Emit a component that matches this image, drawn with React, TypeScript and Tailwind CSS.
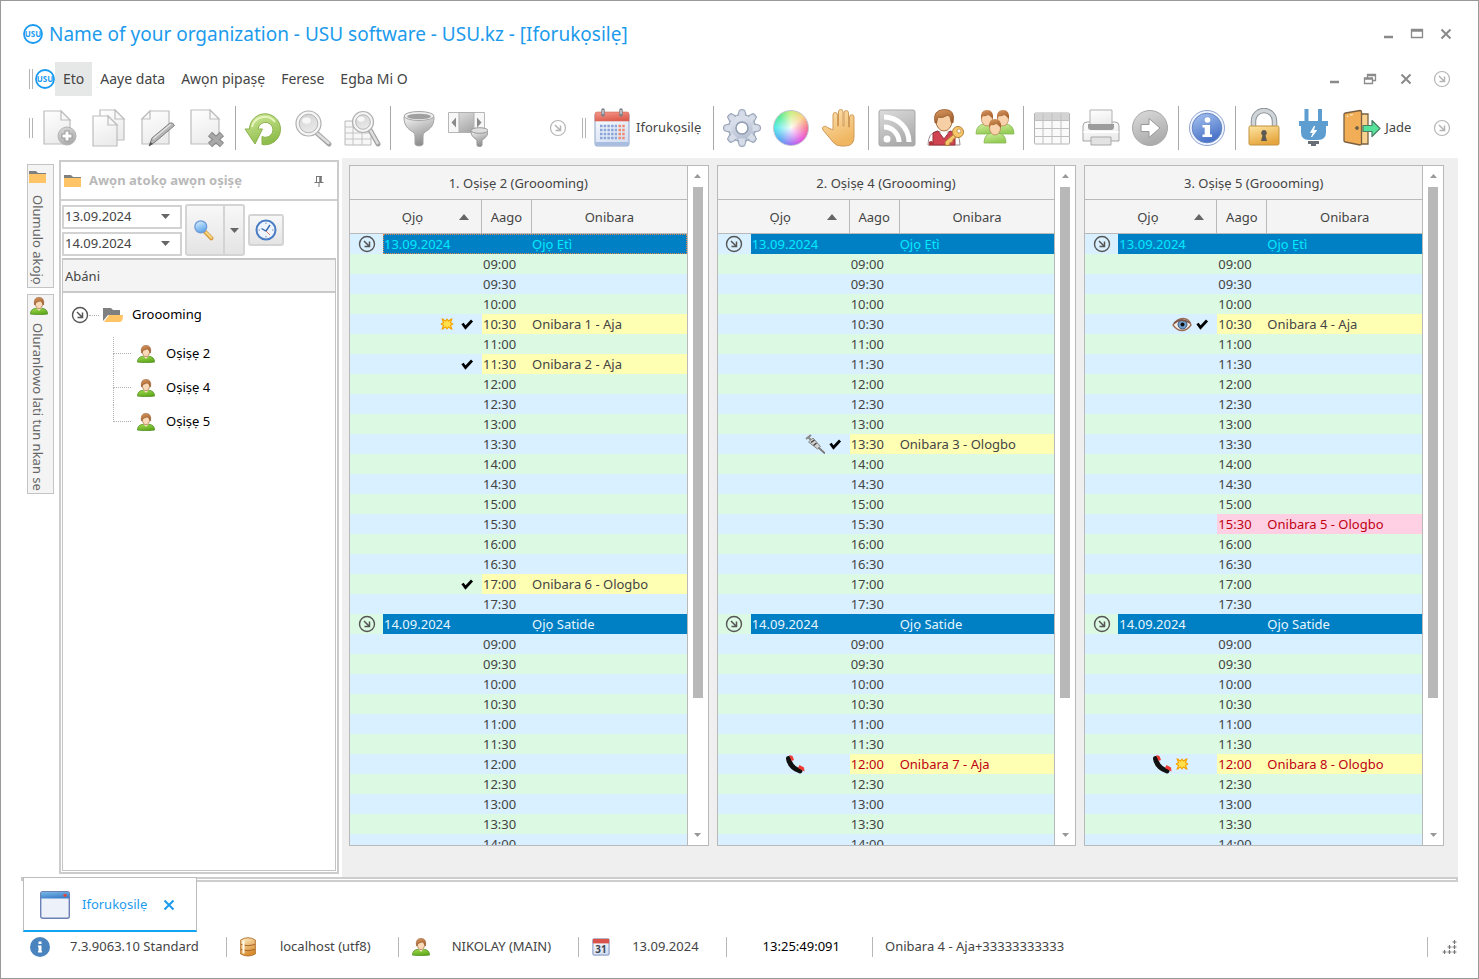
import type { ReactNode } from "react";

/* ================================================================
   USU booking window: menu, toolbar, specialist tree, schedules
   ================================================================ */

type Mark = "check" | "sun" | "eye" | "syringe" | "phone";

interface Booking {
  day: number;
  time: string;
  client: string;
  tone: "normal" | "unpaid" | "missed";
  marks: (Mark | null)[];
}

interface Schedule {
  title: string;
  focused?: boolean;
  bookings: Booking[];
}

/* slots: half-hour rows loaded for the day */
const DAYS = [
  { date: "13.09.2024", name: "Ọjọ Ẹtì", slots: 18, text: "text-[#00eaff]" },
  { date: "14.09.2024", name: "Ọjọ Satide", slots: 11, text: "text-[#e8f6ff]" },
];

const TIMES = Array.from({ length: 18 }, (_, i) => {
  const hour = String(9 + Math.floor(i / 2)).padStart(2, "0");
  return `${hour}:${i % 2 ? "30" : "00"}`;
});

/* marks are three slots, read left to right */
const SCHEDULES: Schedule[] = [
  {
    title: "1. Oṣiṣẹ 2 (Groooming)",
    focused: true,
    bookings: [
      { day: 0, time: "10:30", client: "Onibara 1 - Aja", tone: "normal", marks: [null, "sun", "check"] },
      { day: 0, time: "11:30", client: "Onibara 2 - Aja", tone: "normal", marks: [null, null, "check"] },
      { day: 0, time: "17:00", client: "Onibara 6 - Ologbo", tone: "normal", marks: [null, null, "check"] },
    ],
  },
  {
    title: "2. Oṣiṣẹ 4 (Groooming)",
    bookings: [
      { day: 0, time: "13:30", client: "Onibara 3 - Ologbo", tone: "normal", marks: [null, "syringe", "check"] },
      { day: 1, time: "12:00", client: "Onibara 7 - Aja", tone: "unpaid", marks: ["phone", null, null] },
    ],
  },
  {
    title: "3. Oṣiṣẹ 5 (Groooming)",
    bookings: [
      { day: 0, time: "10:30", client: "Onibara 4 - Aja", tone: "normal", marks: [null, "eye", "check"] },
      { day: 0, time: "15:30", client: "Onibara 5 - Ologbo", tone: "missed", marks: [null, null, null] },
      { day: 1, time: "12:00", client: "Onibara 8 - Ologbo", tone: "unpaid", marks: ["phone", "sun", null] },
    ],
  },
];

const TONES = {
  normal: "bg-[#ffffb4] text-[#444]",
  unpaid: "bg-[#ffffb4] text-[#c00010]",
  missed: "bg-[#ffd0e4] text-[#c00010]",
};

/* ── Icons ── */

function Gradients() {
  const stops: [string, string, string][] = [
    ["gPaper", "#ffffff", "#ececec"],
    ["gSteel", "#f4f4f4", "#8e8e8e"],
    ["gGreen", "#d3eb9c", "#8fbd4c"],
    ["gGear", "#e9edf5", "#b4bed0"],
    ["gHand", "#fde3b2", "#efb560"],
    ["gGold", "#fde6a3", "#e6a63e"],
    ["gGrey", "#dcdcdc", "#acacac"],
    ["gGlass", "#d2d2d2", "#e8e8e8"],
    ["gInfo", "#a9c4f0", "#4a74c8"],
    ["gShirt", "#a4dc4c", "#5fa81e"],
    ["gHair", "#d99a62", "#a5602c"],
    ["gLight", "#d3ef9f", "#94cc55"],
    ["gCal", "#ffffff", "#d5e0f3"],
    ["gRed", "#f59a8c", "#dd5d4e"],
    ["gWin", "#79b9e8", "#3f7fc8"],
    ["gDb", "#fff3cf", "#d98c2c"],
    ["gLens", "#e4f4ff", "#5fa8ec"],
  ];
  return (
    <svg width="0" height="0" className="absolute" aria-hidden="true">
      <defs>
        {stops.map(([id, from, to]) => (
          <linearGradient key={id} id={id} x1="0" y1="0" x2="0.4" y2="1">
            <stop offset="0" stopColor={from} />
            <stop offset="1" stopColor={to} />
          </linearGradient>
        ))}
      </defs>
    </svg>
  );
}

function Big({ children }: { children: ReactNode }) {
  return (
    <svg className="h-10 w-10 shrink-0" viewBox="0 0 40 40" fill="none" aria-hidden="true">
      {children}
    </svg>
  );
}

const sheet = (x: number, y: number, w: number, h: number) => (
  <>
    <path
      d={`M${x} ${y}h${w - 9}l9 9v${h - 9}h${-w}z`}
      fill="url(#gPaper)"
      stroke="#bdbdbd"
      strokeWidth="1.2"
    />
    <path d={`M${x + w - 9} ${y}v9h9z`} fill="#f8f8f8" stroke="#bdbdbd" strokeWidth="1.2" />
  </>
);

const DocAdd = () => (
  <Big>
    {sheet(4, 3, 26, 33)}
    <circle cx="27" cy="28" r="9" fill="url(#gGrey)" stroke="#b4b4b4" />
    <path d="M27 22.500v11M21.500 28h11" stroke="#9b9b9b" strokeWidth="5" />
    <path d="M27 23.500v9M22.500 28h9" stroke="#fff" strokeWidth="3" />
  </Big>
);

const DocCopy = () => (
  <Big>
    {sheet(11, 2, 24, 30)}
    {sheet(4, 8, 24, 30)}
  </Big>
);

const DocEdit = () => (
  <Big>
    <path d="M12 3h19v33H4V11z" fill="url(#gPaper)" stroke="#bdbdbd" strokeWidth="1.2" />
    <path d="M12 3v8H4z" fill="#f8f8f8" stroke="#bdbdbd" strokeWidth="1.2" />
    <path d="M11 38l3-8 18-15q3-1 4.500 2.500L17 34z" fill="#b5b5b5" stroke="#7e7e7e" />
    <path d="M15 31l18-15" stroke="#e2e2e2" strokeWidth="1.500" />
    <path d="M11 38l1.500-4 2.500 2z" fill="#555" />
  </Big>
);

const DocDelete = () => (
  <Big>
    {sheet(4, 2, 28, 34)}
    <path d="M23 26l12 11M35 26L23 37" stroke="#858585" strokeWidth="6" />
    <path d="M23.500 26.500l11 10M34.500 26.500l-11 10" stroke="#a8a8a8" strokeWidth="4" />
  </Big>
);

const Refresh = () => (
  <Big>
    <path
      d="M5.500 21A15.500 15.500 0 1 1 18 36.500V28.500A7.500 7.500 0 1 0 14 21h4.500L11 36 1 21z"
      fill="url(#gGreen)"
      stroke="#8db14d"
    />
    <path d="M8 19A13 13 0 0 1 31 14" stroke="#e5f5bd" strokeWidth="2" />
  </Big>
);

const glass = (cx: number, cy: number, r: number) => (
  <>
    <path
      d={`M${cx + r * 0.7} ${cy + r * 0.8}L36 36`}
      stroke="#a3a3a3"
      strokeWidth="5"
      strokeLinecap="round"
    />
    <path
      d={`M${cx + r * 0.7} ${cy + r * 0.8}L35.500 35`}
      stroke="#dedede"
      strokeWidth="2.500"
      strokeLinecap="round"
    />
    <circle cx={cx} cy={cy} r={r} fill="#f6f6f6" stroke="#b0b0b0" strokeWidth="1.200" />
    <circle cx={cx} cy={cy} r={r - 3.2} fill="url(#gGlass)" stroke="#b4b4b4" />
    <ellipse cx={cx - 2} cy={cy - 3} rx={r * 0.35} ry={r * 0.25} fill="#f7f7f7" />
  </>
);

const Search = () => <Big>{glass(15.5, 15.5, 12.5)}</Big>;

const TableSearch = () => (
  <Big>
    <path d="M3 13h26v24H3z" fill="#f7f7f7" stroke="#b8b8b8" />
    <path d="M3 19h26M3 25h26M3 31h26M11 13v24M20 13v24" stroke="#c4c4c4" />
    {glass(21, 14, 10.5)}
  </Big>
);

const Funnel = () => (
  <Big>
    <path
      d="M5 9c0 9 4 12 9 15 2 1.500 2 3 2 6v6c0 2.500 8 2.500 8 0v-6c0-3 0-4.500 2-6 5-3 9-6 9-15z"
      fill="url(#gSteel)"
      stroke="#a2a2a2"
    />
    <ellipse cx="20" cy="8" rx="15" ry="4.500" fill="#efefef" stroke="#a5a5a5" />
    <ellipse cx="20" cy="8.500" rx="12" ry="2.800" fill="#a0a0a0" />
  </Big>
);

const ColumnFilter = () => (
  <Big>
    <path d="M.500 4.500h36v20H.500z" fill="#f7f7f7" stroke="#b7b7b7" />
    <path d="M11 4.500h15v20H11z" fill="url(#gGrey)" stroke="#b0b0b0" />
    <path d="M8 9.500v10l-4.500-5zM29 9.500v10l4.500-5z" fill="#8a8a8a" />
    <path
      d="M23 23c0 5 3 7 6 9v5c0 2 5 2 5 0v-5c3-2 6-4 6-9z"
      fill="url(#gSteel)"
      stroke="#979797"
    />
    <ellipse cx="31.500" cy="22.500" rx="8.500" ry="2.800" fill="#dedede" stroke="#979797" />
  </Big>
);

const Calendar = () => (
  <Big>
    <rect x="3" y="5" width="34" height="33" rx="2" fill="url(#gCal)" stroke="#8fa3c8" />
    <path d="M3 13V6q0-2 2-2h30q2 0 2 2v7z" fill="url(#gRed)" stroke="#d9695c" strokeWidth=".6" />
    <path d="M3.500 34h33v2.500q0 1-1 1h-31q-1 0-1-1z" fill="#a9bde0" />
    <path d="M11 2v5M29 2v5" stroke="#7c8088" strokeWidth="3.500" strokeLinecap="round" />
    <path d="M11 2v4M29 2v4" stroke="#dfe2e8" strokeWidth="1.200" />
    {[18, 22, 26, 30].map((y) => (
      <g key={y}>
        <path d={`M8 ${y}h17`} stroke="#8ba4d8" strokeWidth="2.500" strokeDasharray="2.500 1.200" />
        <path d={`M26.500 ${y}h6.500`} stroke="#f08a70" strokeWidth="2.500" strokeDasharray="2.500 1.200" />
      </g>
    ))}
  </Big>
);

const Gear = () => {
  const teeth = Array.from({ length: 8 }, (_, i) => i * 45);
  return (
    <Big>
      {teeth.map((a) => (
        <path
          key={a}
          d="M15.500 8l2-6q2.500-1 5 0l2 6z"
          transform={`rotate(${a} 20 20)`}
          fill="#ccd3e0"
          stroke="#95a1b5"
        />
      ))}
      <circle cx="20" cy="20" r="13.500" fill="url(#gGear)" stroke="#95a1b5" />
      {teeth.map((a) => (
        <path key={a} d="M16.500 9.500l1.500-6h4l1.500 6z" transform={`rotate(${a} 20 20)`} fill="#d6dde8" />
      ))}
      <circle cx="20" cy="20" r="6" fill="#fff" stroke="#8f9bb0" strokeWidth="1.500" />
    </Big>
  );
};

const Wheel = () => (
  <span className="h-9 w-9 rounded-full border border-[#c4c4d0] bg-[radial-gradient(circle,#ffffffee,#ffffff00_72%),conic-gradient(#c8ee7a,#f7cf7a,#f46a8a,#e84ad8,#9a6af4,#4aa4f4,#48e8e8,#4bea90,#c8ee7a)]" />
);

const Hand = () => (
  <Big>
    <path
      d="M13 22V7q0-2.500 2.200-2.500T17.500 7v11h1V4q0-2.500 2.300-2.500T23 4v14h1V5q0-2.500 2.200-2.500T28.500 5v14h1V9q0-2.200 2.200-2.200T34 9v20q0 9-9 9h-4q-5 0-8-4L3 22q-1.500-2.500.500-3.500t4 1z"
      fill="url(#gHand)"
      stroke="#d09a58"
    />
  </Big>
);

const Rss = () => (
  <Big>
    <rect x="2" y="2" width="36" height="36" rx="2" fill="url(#gGrey)" stroke="#a8a8a8" />
    <circle cx="10" cy="31" r="3.500" fill="#fff" />
    <path d="M7 19a15 15 0 0 1 15 15M7 9a25 25 0 0 1 25 25" stroke="#fff" strokeWidth="5" />
  </Big>
);

const UserKey = () => (
  <Big>
    <path d="M2 37q0-12 9-14l7 2 7-2q9 2 9 14z" fill="#fff" stroke="#9b8f92" />
    <path d="M7 37V25l5-2 6 8 6-8 5 3v11z" fill="#cf4450" stroke="#98303a" />
    <path d="M14 23l4 5 4-5z" fill="#fff" />
    <path d="M3 34q2-2 4 0v3.500H3z" fill="#b3363f" />
    <ellipse cx="18" cy="13" rx="8" ry="10" fill="#f6cfa6" stroke="#a7703f" />
    <path d="M9 15Q6 2 18 1.500T27 15l-2-1q0-5-3-7-6 4-10 2l-1.500 6z" fill="url(#gHair)" stroke="#8c5329" strokeWidth=".7" />
    <g stroke="#b5803a" fill="#f7c86b">
      <path d="M29 25l-10 9 .500 3.500 4-.500.500-2.500 2.500-.500.500-2.500 5-4z" />
      <circle cx="32" cy="24" r="5.500" />
    </g>
    <circle cx="33" cy="23" r="2" fill="#fff" stroke="#b5803a" strokeWidth=".7" />
  </Big>
);

const miniUser = (x: number, y: number) => (
  <g transform={`translate(${x} ${y})`}>
    <path d="M-11 21Q-11 12-3 11h6q8 1 8 10z" fill="url(#gLight)" stroke="#86b555" strokeWidth=".8" />
    <ellipse cx="0" cy="6" rx="5.500" ry="7" fill="#f8d3ae" stroke="#b57a4a" strokeWidth=".7" />
    <path d="M-6 6Q-7-3 0-3T6 6L4 4Q2 2 1 2-2 4-4 3z" fill="url(#gHair)" />
  </g>
);

const Users = () => (
  <Big>
    {miniUser(12, 5)}
    {miniUser(28, 5)}
    {miniUser(20, 14)}
  </Big>
);

const TableIcon = () => (
  <Big>
    <rect x="2.500" y="5" width="35" height="31" rx="1" fill="#fafafa" stroke="#b3b3b3" />
    <path d="M3 5.500h34v7H3z" fill="#d3d3d3" />
    <path d="M2.500 12.500h35M2.500 20.500h35M2.500 28.500h35M11 5v31M20 5v31M29 5v31" stroke="#c0c0c0" />
  </Big>
);

const Printer = () => (
  <Big>
    <path d="M2 18q0-4 4-4h28q4 0 4 4v15H2z" fill="url(#gPaper)" stroke="#a5a5a5" />
    <path d="M9 2h22v15H9z" fill="url(#gPaper)" stroke="#b0b0b0" />
    <path d="M7 16h26v3q0 3-3 3H10q-3 0-3-3z" fill="#9c9c9c" />
    <path d="M2.500 24h35" stroke="#fff" strokeWidth="2" />
    <path d="M10 29h20v8H10z" fill="#e3e3e3" stroke="#a9a9a9" />
  </Big>
);

const Forward = () => (
  <Big>
    <circle cx="20" cy="20" r="17.500" fill="url(#gGrey)" stroke="#a8a8a8" />
    <path d="M11 16.500h8v-6L30 20l-11 9.500v-6h-8z" fill="#fff" stroke="#989898" />
  </Big>
);

const Info = () => (
  <Big>
    <circle cx="20" cy="20" r="17.500" fill="#f0f5ff" stroke="#8fa5d0" />
    <circle cx="20" cy="20" r="14.800" fill="url(#gInfo)" stroke="#6585c2" />
    <circle cx="20.500" cy="12" r="2.800" fill="#fff" />
    <path d="M15.500 17h7.500v9.500h2V29H15.500v-2.500h2.200v-7h-2.200z" fill="#fff" />
  </Big>
);

const Lock = () => (
  <Big>
    <path d="M9.500 19V13a10.500 10.500 0 0 1 21 0v6" stroke="#8b9398" strokeWidth="5.500" />
    <path d="M9.500 19V13a10.500 10.500 0 0 1 21 0v6" stroke="#cfd5d8" strokeWidth="3.500" />
    <rect x="5" y="18" width="30" height="19" rx="1.500" fill="url(#gGold)" stroke="#c3913f" />
    <path d="M20 22a3 3 0 0 1 1.500 5.500L23 33h-6l1.500-5.500A3 3 0 0 1 20 22z" fill="#5e5a52" />
  </Big>
);

const Plug = () => (
  <Big>
    <path d="M11.500 1h4v13h-4zM25 1h4v13h-4z" fill="#5d9dd0" />
    <path d="M6 13h29v5h-2v6q0 8-8 8h-9q-8 0-8-8v-6H6z" fill="#5d9dd0" />
    <path d="M15 33h11v3h-3v2h-5v-2h-3z" fill="#686e75" />
    <path d="M21.500 18l-4 6.500h3L18.500 29l5-6.500h-3z" fill="#fff" stroke="#fff" />
  </Big>
);

const Exit = () => (
  <Big>
    <path d="M20 6h7v30h-7z" fill="#f8d28e" stroke="#7a6040" strokeWidth="1.300" />
    <path d="M4.500 5L19 2.500q1.500 0 1.500 1.500v31.500q0 1.500-1.500 1.500L4.500 34q-1.500 0-1.500-1.500v-26Q3 5 4.500 5z" fill="#f2ae56" stroke="#7a6040" strokeWidth="1.300" />
    <path d="M6 9l1-1.500M9 7l3-.500" stroke="#fde1ac" strokeWidth="1.500" />
    <circle cx="16" cy="20" r="1.500" fill="#6b6b58" stroke="#4f4634" strokeWidth=".6" />
    <path d="M22 17.500h9v-5l8 8-8 8v-5h-9z" fill="#57e29b" stroke="#4a7f66" strokeWidth="1.200" strokeLinejoin="round" />
  </Big>
);

function Logo() {
  return (
    <svg className="h-5 w-5 shrink-0" viewBox="0 0 20 20" aria-hidden="true">
      <circle cx="10" cy="10" r="9" fill="#fff" stroke="#1b9bf0" strokeWidth="1.800" />
      <text
        x="10"
        y="13"
        textAnchor="middle"
        fontFamily="Noto Sans, sans-serif"
        fontSize="8"
        fontWeight="700"
        fill="#1b9bf0"
      >
        USU
      </text>
    </svg>
  );
}

function UserIcon() {
  return (
    <svg className="h-[18px] w-[18px] shrink-0" viewBox="0 0 20 20" aria-hidden="true">
      <path d="M.500 19Q.500 13 7 12.500h6q6.500.500 6.500 6.500-9.500 1.500-19 0z" fill="url(#gShirt)" stroke="#4d8a1c" strokeWidth=".8" />
      <path d="M7 12l3 3.500 3-3.500z" fill="#f7e6d0" />
      <ellipse cx="10" cy="7.500" rx="4" ry="5.500" fill="#f9d9b8" stroke="#9c5c2b" strokeWidth=".7" />
      <path d="M5 9Q3.500.500 10 .500T15 9L13.500 6Q12 4.500 11 4.500L7 6z" fill="url(#gHair)" stroke="#8c4f22" strokeWidth=".6" />
    </svg>
  );
}

function Folder({ open }: { open?: boolean }) {
  return (
    <svg className="h-5 w-5 shrink-0" viewBox="0 0 20 20" aria-hidden="true">
      {open ? (
        <>
          <path d="M0 3h8l2 2h7v5H5L0 16z" fill="#808080" />
          <path d="M6 10h14q0 7-3 7H1z" fill="#ffc466" />
        </>
      ) : (
        <>
          <path d="M1 4h7l2 2h8v3H1z" fill="#808080" />
          <path d="M1 7h17v9H1z" fill="#ffc466" />
        </>
      )}
    </svg>
  );
}

function CircleArrow({ faded }: { faded?: boolean }) {
  return (
    <svg className="h-[18px] w-[18px]" viewBox="0 0 18 18" fill="none" stroke={faded ? "#b5b5b5" : "#555"} aria-hidden="true">
      <circle cx="9" cy="9" r="7.500" strokeWidth={faded ? 1.2 : 1.4} />
      <path d="M6 6l5 5M11.500 6.500v5h-5" strokeWidth="1.500" />
    </svg>
  );
}

function Triangle({ up, className = "h-[5px] w-[9px]", color = "#666" }: { up?: boolean; className?: string; color?: string }) {
  return (
    <svg className={className} viewBox="0 0 10 6" preserveAspectRatio="none" aria-hidden="true">
      <path d={up ? "M5 0l5 6H0z" : "M0 0h10L5 6z"} fill={color} />
    </svg>
  );
}

function MarkIcon({ mark }: { mark: Mark }) {
  return (
    <svg className="h-5 w-5 shrink-0" viewBox="0 0 20 20" fill="none" aria-hidden="true">
      {mark === "check" && <path d="M5.500 9.500l3 4 6.500-7" stroke="#000" strokeWidth="2.800" />}
      {mark === "sun" && (
        <path
          d="M10 5l1.400 2L15 4.800l-1.600 3.800 2.400 1.400-2.400 1.400 1.600 3.800-3.600-2.200L10 15l-1.400-2L5 15.200l1.600-3.800L4.200 10l2.400-1.400L5 4.800 8.600 7z"
          fill="#ffe04a"
          stroke="#f5a000"
          strokeWidth="1.100"
          strokeLinejoin="round"
        />
      )}
      {mark === "eye" && (
        <>
          <path d="M1 11Q5 4.500 11 4.500T19 11q-4 5.500-9 5.500T1 11z" fill="#f5efe9" stroke="#9a6a52" strokeWidth="1.300" />
          <circle cx="10.500" cy="10.500" r="4.500" fill="#6f9fce" stroke="#3d5575" />
          <circle cx="10.500" cy="10.500" r="2" fill="#111" />
          <path d="M2 9.500Q9 3 18 9" stroke="#7a5548" strokeWidth="1.500" />
        </>
      )}
      {mark === "syringe" && (
        <>
          <path d="M1 5l5-4M3.500 3.500L6 6" stroke="#888" strokeWidth="2" />
          <path d="M3.500 8L8 4l7.500 8.500-3 2.500z" fill="#d2d2d2" stroke="#888" />
          <path d="M6 8.500L9.500 6M11.500 9l-3 2.500" stroke="#444" strokeWidth="1.500" />
          <path d="M13.500 13.500L20 19.500" stroke="#777" strokeWidth="1.800" />
        </>
      )}
      {mark === "phone" && (
        <>
          <path d="M3.500 4.500Q5 13.500 15 17" stroke="#111" strokeWidth="5" strokeLinecap="round" />
          <path d="M4 1l3.500 1L9 6 6.500 7z" fill="#ee3b33" />
          <path d="M13 14l1.500-3 4.500 2.500.500 4z" fill="#ee3b33" />
        </>
      )}
    </svg>
  );
}

function WindowGlyph({ kind }: { kind: "min" | "max" | "restore" | "close" }) {
  return (
    <svg className="h-[14px] w-[14px]" viewBox="0 0 14 14" fill="none" stroke="#8a8a8a" aria-hidden="true">
      {kind === "min" && <path d="M3 10h9" strokeWidth="2.500" />}
      {kind === "max" && <path d="M1.500 2.500h11v8h-11zM1.500 4h11" strokeWidth="1.300" />}
      {kind === "restore" && (
        <path d="M4.500 6V2.500h8v6H9.500M4.500 3.500h8M1.500 6h8v5.500h-8zM1.500 7h8" strokeWidth="1.300" />
      )}
      {kind === "close" && <path d="M2.500 2.500l9 9M11.500 2.500l-9 9" strokeWidth="2" />}
    </svg>
  );
}

/* ── Chrome ── */

const Grip = () => <span className="mr-0.5 h-5 w-[4px] shrink-0 border-x border-[#b4b4b4]" />;

const Sep = () => (
  <span className="flex w-2 shrink-0 justify-center">
    <span className="h-11 w-px bg-[#a8a8a8]" />
  </span>
);

function Tool({ label, children }: { label: string; children: ReactNode }) {
  return (
    <button aria-label={label} className="flex w-[49px] shrink-0 items-center justify-center">
      {children}
    </button>
  );
}

function TitleBar() {
  return (
    <header className="flex h-[61px] shrink-0 items-center pt-1 pr-[18px] pl-[22px]">
      <Logo />
      <h1 className="ml-1.5 flex-1 text-[19px] leading-6 text-[#1c9bec]">
        Name of your organization - USU software - USU.kz - [Iforukọsilẹ]
      </h1>
      {(["min", "max", "close"] as const).map((kind) => (
        <button key={kind} aria-label={kind} className="flex w-[29px] justify-center">
          <WindowGlyph kind={kind} />
        </button>
      ))}
    </header>
  );
}

function MenuBar() {
  return (
    <nav className="flex h-[34px] shrink-0 items-center pr-[18px] pl-7">
      <Grip />
      <Logo />
      {["Eto", "Aaye data", "Awọn pipaṣẹ", "Ferese", "Egba Mi O"].map((item, i) => (
        <button key={item} className={`h-full px-2 text-sm ${i === 0 ? "bg-[#e6e8e8]" : ""}`}>
          {item}
        </button>
      ))}
      <span className="flex-1" />
      {(["min", "restore", "close"] as const).map((kind) => (
        <button key={kind} aria-label={`${kind} form`} className="flex w-9 justify-center">
          <WindowGlyph kind={kind} />
        </button>
      ))}
      <button aria-label="More menu items" className="flex w-9 justify-center">
        <CircleArrow faded />
      </button>
    </nav>
  );
}

function Toolbar() {
  return (
    <div className="flex h-[62px] shrink-0 items-center pt-0.5 pr-[18px] pl-7">
      <Grip />
      <Tool label="Add"><DocAdd /></Tool>
      <Tool label="Copy"><DocCopy /></Tool>
      <Tool label="Edit"><DocEdit /></Tool>
      <Tool label="Delete"><DocDelete /></Tool>
      <Sep />
      <Tool label="Refresh"><Refresh /></Tool>
      <Tool label="Search"><Search /></Tool>
      <Tool label="Search in table"><TableSearch /></Tool>
      <Sep />
      <Tool label="Filter"><Funnel /></Tool>
      <Tool label="Column filter"><ColumnFilter /></Tool>
      <button aria-label="More actions" className="ml-12 flex w-9 shrink-0 justify-center">
        <CircleArrow faded />
      </button>
      <span className="w-1.5" />
      <Grip />
      <button className="flex shrink-0 items-center gap-1 pr-2 pl-1 text-[13px]">
        <Calendar />
        Iforukọsilẹ
      </button>
      <Sep />
      <Tool label="Settings"><Gear /></Tool>
      <Tool label="Colours"><Wheel /></Tool>
      <Tool label="Stop"><Hand /></Tool>
      <Sep />
      <Tool label="News"><Rss /></Tool>
      <Tool label="Access rights"><UserKey /></Tool>
      <Tool label="Users"><Users /></Tool>
      <Sep />
      <Tool label="Table"><TableIcon /></Tool>
      <Tool label="Print"><Printer /></Tool>
      <Tool label="Next"><Forward /></Tool>
      <Sep />
      <Tool label="About"><Info /></Tool>
      <Sep />
      <Tool label="Lock"><Lock /></Tool>
      <Tool label="Connection"><Plug /></Tool>
      <button className="flex shrink-0 items-center gap-1 pl-1 text-[13px]">
        <Exit />
        Jade
      </button>
      <button aria-label="More tools" className="ml-auto flex w-9 shrink-0 justify-center">
        <CircleArrow faded />
      </button>
    </div>
  );
}

/* ── Left dock ── */

function SideTabs() {
  const tab =
    "flex w-[27px] flex-col items-start border border-[#c4c4c4] bg-[#f4f4f4] pt-0.5 text-[13px] leading-5 text-[#666]";
  const text = "pt-2 pb-0.5 whitespace-nowrap [writing-mode:vertical-rl]";
  return (
    <div className="flex shrink-0 flex-col gap-1.5 pt-1.5">
      <button className={tab}>
        <Folder />
        <span className={text}>Olumulo akojọ</span>
      </button>
      <button className={tab}>
        <span className="pl-0.5"><UserIcon /></span>
        <span className={text}>Oluranlowo lati tun nkan se</span>
      </button>
    </div>
  );
}

function DateField({ label, value }: { label: string; value: string }) {
  return (
    <div className="flex h-6 w-[120px] items-center border-2 border-[#d2d2d2] bg-white">
      <input aria-label={label} defaultValue={value} className="w-20 min-w-0 flex-1 pl-px text-[13px] outline-none" />
      <button aria-label={`${label} list`} className="px-2.5">
        <Triangle />
      </button>
    </div>
  );
}

function TreePanel() {
  const staff = ["Oṣiṣẹ 2", "Oṣiṣẹ 4", "Oṣiṣẹ 5"];
  const frame = "rounded-[3px] border-2 border-[#d4d4d4] bg-linear-to-b from-[#f8f8f8] to-[#e4e4e4]";
  return (
    <section className="mt-0.5 mb-[3px] ml-[5px] flex w-[280px] shrink-0 flex-col border-2 border-[#cccccc]">
      <div className="flex h-[39px] items-center border-b-2 border-[#d0d0d0] px-0.5">
        <Folder />
        <h2 className="ml-1.5 flex-1 text-[13px] font-bold text-[#b9b9b9]">Awọn atokọ awọn oṣiṣẹ</h2>
        <button aria-label="Pin panel" className="mr-2.5">
          <svg className="h-3 w-3" viewBox="0 0 12 12" fill="none" stroke="#777">
            <path d="M3.500 1v6M3 1.500h6M1.500 7.500h9M6 8v4" />
            <path d="M7.500 1v6" strokeWidth="2.500" />
          </svg>
        </button>
      </div>
      <div className="flex items-center gap-[3px] px-px pt-[3px]">
        <div className="flex flex-col gap-[3px]">
          <DateField label="From" value="13.09.2024" />
          <DateField label="To" value="14.09.2024" />
        </div>
        <div className={`flex h-[52px] ${frame}`}>
          <button aria-label="Show" className="w-9 pl-1.5">
            <svg className="h-[22px] w-[22px]" viewBox="0 0 24 24" fill="none">
              <path d="M13 14l7 7" stroke="#d59a3f" strokeWidth="4.500" strokeLinecap="round" />
              <path d="M14 14.500l6 6" stroke="#f8d67c" strokeWidth="2.200" strokeLinecap="round" />
              <circle cx="8.500" cy="8.500" r="6.500" fill="url(#gLens)" stroke="#6f9ad8" strokeWidth="1.400" />
            </svg>
          </button>
          <button aria-label="Show options" className="flex w-5 items-center justify-center border-l-2 border-[#d4d4d4]">
            <Triangle />
          </button>
        </div>
        <button aria-label="Current time" className={`flex h-8 w-9 items-center justify-center ${frame}`}>
          <svg className="h-[22px] w-[22px]" viewBox="0 0 22 22" fill="none">
            <circle cx="11" cy="11" r="9.500" fill="#eef5ff" stroke="#4a7cc4" strokeWidth="2" />
            <path d="M11 3.500V5M11 17v1.500M3.500 11H5M17 11h1.500" stroke="#7b8da8" />
            <path d="M6.500 9.500L11 12l4-6" stroke="#3867ad" strokeWidth="1.400" />
            <path d="M11 12l4 4" stroke="#e07a5c" />
          </svg>
        </button>
      </div>
      <div className="mx-px mt-0.5 mb-px flex flex-1 flex-col border border-[#c4c4c4]">
        <div className="flex h-[34px] items-center border-t border-b-2 border-[#c9c9c9] bg-[#f4f4f4] px-0.5 pt-0.5 text-[13px]">
          Abáni
        </div>
        <div className="text-[13px] text-black">
          <div className="flex h-11 items-center pl-2">
            <button aria-label="Collapse Groooming">
              <CircleArrow />
            </button>
            <span className="mr-1 w-[10px] border-t border-dotted border-[#b0b0b0]" />
            <Folder open />
            <span className="ml-[9px]">Groooming</span>
          </div>
          <ul className="pl-[50px]">
            {staff.map((name, i) => (
              <li key={name} className="flex h-[34px] items-center">
                <span className="mr-1.5 flex w-[18px] flex-col self-stretch">
                  <span className="h-[17px] border-b border-l border-dotted border-[#b0b0b0]" />
                  {i < staff.length - 1 && (
                    <span className="h-[17px] border-l border-dotted border-[#b0b0b0]" />
                  )}
                </span>
                <UserIcon />
                <span className="ml-[11px]">{name}</span>
              </li>
            ))}
          </ul>
        </div>
      </div>
    </section>
  );
}

/* ── Schedules ── */

function ScheduleGrid({ schedule }: { schedule: Schedule }) {
  const th = "h-[34px] border-b border-[#b9b9b9] bg-[#f4f4f4] p-0 font-normal";
  const stripe = (n: number) => (n % 2 ? "bg-[#dcfae3]" : "bg-[#d8f0ff]");
  return (
    <section className="flex min-w-0 flex-1 overflow-hidden border border-[#b9b9b9] bg-white">
      <div className="min-w-0 flex-1 overflow-hidden border-r border-[#b9b9b9]">
        <table className="w-full table-fixed border-separate border-spacing-0 text-[13px] leading-5">
          <colgroup>
            <col className="w-[33px]" />
            <col className="w-[99px]" />
            <col className="w-[50px]" />
            <col />
          </colgroup>
          <thead>
            <tr>
              <th colSpan={4} className={th}>{schedule.title}</th>
            </tr>
            <tr>
              <th colSpan={2} className={`${th} border-r`}>
                <span className="flex items-center pr-3 pl-6">
                  <span className="flex-1 pr-2">Ọjọ</span>
                  <Triangle up className="h-[6px] w-[10px]" />
                </span>
              </th>
              <th className={`${th} border-r`}>Aago</th>
              <th className={th}>Onibara</th>
            </tr>
          </thead>
          {DAYS.map((day, d) => {
            const first = d * (TIMES.length + 1);
            const outline = schedule.focused && d === 0 ? "outline-1 -outline-offset-1 outline-dotted outline-[#e08850]" : "";
            return (
              <tbody key={day.date}>
                <tr className="h-5">
                  <td className={`p-0 ${stripe(first)}`}>
                    <button aria-label={`Collapse ${day.date}`} className="flex w-full justify-center">
                      <CircleArrow />
                    </button>
                  </td>
                  <td colSpan={3} className={`bg-[#0080c4] p-0 ${day.text} ${outline}`}>
                    <div className="flex pl-px">
                      <span className="w-[148px] shrink-0">{day.date}</span>
                      <span>{day.name}</span>
                    </div>
                  </td>
                </tr>
                {TIMES.slice(0, day.slots).map((time, t) => {
                  const booking = schedule.bookings.find((b) => b.day === d && b.time === time);
                  const bg = stripe(first + t + 1);
                  const tone = booking ? TONES[booking.tone] : bg;
                  return (
                    <tr key={time} className="h-5">
                      <td colSpan={2} className={`p-0 ${bg}`}>
                        {booking && (
                          <div className="flex h-5 justify-end pr-[5px]">
                            {booking.marks.map((mark, m) =>
                              mark ? <MarkIcon key={m} mark={mark} /> : <span key={m} className="w-5" />
                            )}
                          </div>
                        )}
                      </td>
                      <td className={`p-0 pl-px ${tone}`}>{time}</td>
                      <td className={`p-0 ${tone}`}>{booking?.client}</td>
                    </tr>
                  );
                })}
              </tbody>
            );
          })}
        </table>
      </div>
      <div className="flex w-5 shrink-0 flex-col items-center py-2">
        <Triangle up className="h-1 w-[7px]" color="#999" />
        <span className="mt-[9px] mb-auto h-[77%] w-2.5 bg-[#b8b8b8]" />
        <Triangle className="h-1 w-[7px]" color="#999" />
      </div>
    </section>
  );
}

/* ── Bottom ── */

function FormTabs() {
  return (
    <div className="flex h-[55px] shrink-0 items-start pr-5 pl-5">
      <span className="h-1 w-0.5 bg-[#c9c9c9]" />
      <div className="flex h-full w-[174px] items-center border border-[#bcbcbc] border-b-2 border-b-[#12a5f4] pt-0.5 pl-4">
        <svg className="h-7 w-[30px]" viewBox="0 0 30 28" aria-hidden="true">
          <rect x=".7" y=".7" width="28.600" height="26.600" rx="2" fill="#edf2fa" stroke="#6c80b4" strokeWidth="1.400" />
          <path d="M1 7.500V2.500Q1 1 2.500 1h25Q29 1 29 2.500v5z" fill="url(#gWin)" />
          <circle cx="25" cy="4.300" r="1.600" fill="#e4463a" />
        </svg>
        <span className="ml-3 text-[13px] text-[#1c9bec]">Iforukọsilẹ</span>
        <button aria-label="Close tab" className="ml-4">
          <svg className="h-3 w-3" viewBox="0 0 12 12" stroke="#1c9bec" strokeWidth="2">
            <path d="M1.500 1.500l9 9M10.500 1.500l-9 9" />
          </svg>
        </button>
      </div>
      <span className="h-[5px] flex-1 border-y-2 border-r-2 border-[#cdcdcd]" />
    </div>
  );
}

function StatusItem({ icon, children }: { icon?: ReactNode; children: ReactNode }) {
  return (
    <div className="flex h-5 items-center border-r border-[#b8b8b8] pr-[27px] pl-[13px]">
      <span className="flex w-10">{icon}</span>
      <span>{children}</span>
    </div>
  );
}

function StatusBar() {
  return (
    <footer className="flex h-[46px] shrink-0 items-center pr-5 pb-4 pl-4 text-[13px]">
      <StatusItem
        icon={
          <svg className="h-5 w-5" viewBox="0 0 20 20" aria-hidden="true">
            <circle cx="10" cy="10" r="10" fill="#4a84bf" />
            <path d="M8.500 4.500h3v2.500h-3zM8 8.500h3.500V14H12v1.500H8V14h.500v-4H8z" fill="#fff" />
          </svg>
        }
      >
        7.3.9063.10 Standard
      </StatusItem>
      <StatusItem
        icon={
          <svg className="h-5 w-4" viewBox="0 0 16 20" aria-hidden="true">
            <path d="M.700 3Q8-1.500 15.300 3v14Q8 21 .700 17z" fill="url(#gDb)" stroke="#b5742c" />
            <path d="M1 7.500q7 2.500 14 0M1 12.500q7 2.500 14 0" fill="none" stroke="#a8652a" />
            <path d="M3.500 3.500v13" stroke="#fffbe8" strokeWidth="2" />
          </svg>
        }
      >
        localhost (utf8)
      </StatusItem>
      <StatusItem icon={<UserIcon />}>NIKOLAY (MAIN)</StatusItem>
      <StatusItem
        icon={
          <svg className="h-[18px] w-[18px]" viewBox="0 0 20 20" aria-hidden="true">
            <rect x="1" y="1" width="18" height="18" rx="1" fill="url(#gCal)" stroke="#7186b8" />
            <path d="M1 1h18v5H1z" fill="#d9534a" />
            <text x="10" y="16.500" textAnchor="middle" fontFamily="Noto Sans, sans-serif" fontSize="11" fontWeight="700" fill="#3f4754">
              31
            </text>
          </svg>
        }
      >
        13.09.2024
      </StatusItem>
      <div className="flex h-5 items-center border-r border-[#b8b8b8] pr-8 pl-9 text-black">13:25:49:091</div>
      <span className="pl-3">Onibara 4 - Aja+33333333333</span>
      <span className="ml-auto h-5 w-px bg-[#b8b8b8]" />
      <svg className="ml-3.5 h-4 w-4" viewBox="0 0 16 16" stroke="#777" strokeWidth="1.200" aria-hidden="true">
        <path d="M12.500 1v4M10.500 3h4M12.500 6v4M10.500 8h4M12.500 11v4M10.500 13h4M7.500 6v4M5.500 8h4M7.500 11v4M5.500 13h4M2.500 11v4M.500 13h4" />
      </svg>
    </footer>
  );
}

export default function App() {
  return (
    <div className="flex h-screen flex-col overflow-hidden border border-[#999] bg-white font-['Noto_Sans',sans-serif] text-[#444]">
      <Gradients />
      <TitleBar />
      <MenuBar />
      <Toolbar />
      <main className="flex min-h-0 flex-1 pr-5 pl-[26px]">
        <SideTabs />
        <TreePanel />
        <div className="ml-[3px] flex min-w-0 flex-1 gap-2 bg-[#efefef] pt-[7px] pr-3.5 pb-[31px] pl-[7px]">
          {SCHEDULES.map((schedule) => (
            <ScheduleGrid key={schedule.title} schedule={schedule} />
          ))}
        </div>
      </main>
      <FormTabs />
      <StatusBar />
    </div>
  );
}
